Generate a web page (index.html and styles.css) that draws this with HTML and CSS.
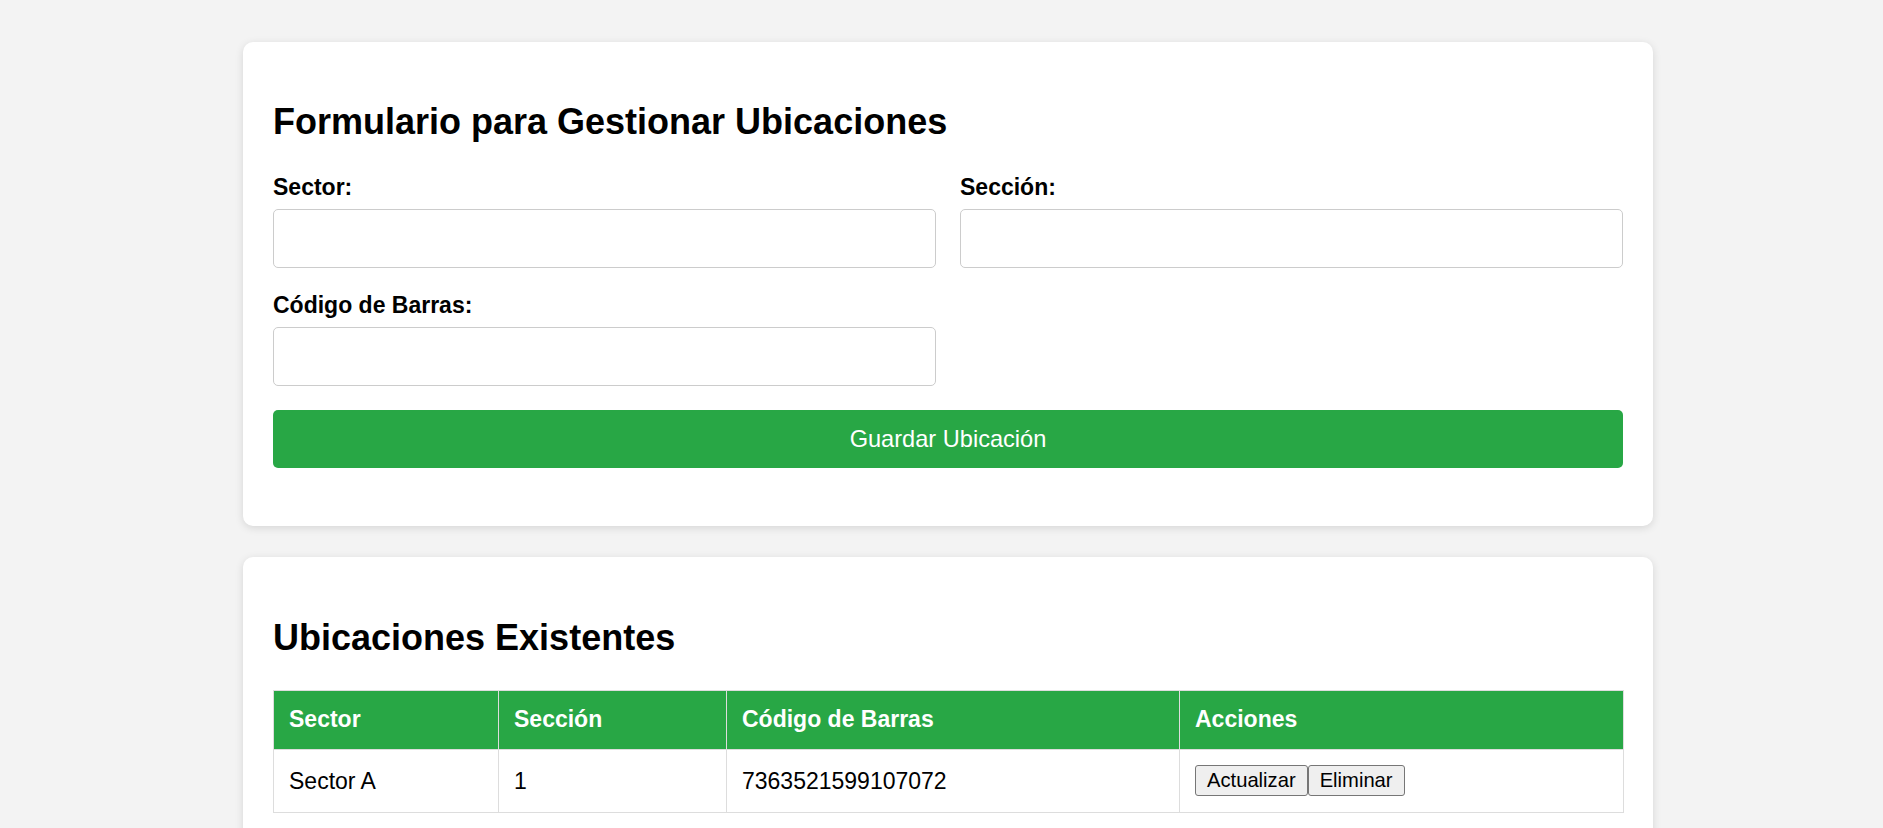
FILE: index.html
```html
<!DOCTYPE html>
<html lang="es">
<head>
<meta charset="utf-8">
<title>Gestionar Ubicaciones</title>
<link rel="stylesheet" href="styles.css">
</head>
<body>
<main class="page">
  <section class="card">
    <h2 class="title">Formulario para Gestionar Ubicaciones</h2>
    <form class="form">
      <div class="field">
        <label class="label" for="sector">Sector:</label>
        <input class="input" id="sector" type="text">
      </div>
      <div class="field">
        <label class="label" for="seccion">Sección:</label>
        <input class="input" id="seccion" type="text">
      </div>
      <div class="field">
        <label class="label" for="codigo">Código de Barras:</label>
        <input class="input" id="codigo" type="text">
      </div>
      <button class="save" type="button">Guardar Ubicación</button>
    </form>
  </section>

  <section class="card card-list">
    <h2 class="title title-list">Ubicaciones Existentes</h2>
    <table class="table">
      <colgroup>
        <col class="c1"><col class="c2"><col class="c3"><col class="c4">
      </colgroup>
      <thead>
        <tr>
          <th>Sector</th>
          <th>Sección</th>
          <th>Código de Barras</th>
          <th>Acciones</th>
        </tr>
      </thead>
      <tbody>
        <tr>
          <td>Sector A</td>
          <td>1</td>
          <td>7363521599107072</td>
          <td><div class="actions"><button class="btn" type="button">Actualizar</button><button class="btn" type="button">Eliminar</button></div></td>
        </tr>
      </tbody>
    </table>
  </section>
</main>
</body>
</html>
```

FILE: styles.css
```css
* { box-sizing: border-box; }

html, body {
  margin: 0;
  background: #f3f3f3;
}

body {
  font-family: "Liberation Sans", Arial, sans-serif;
  color: #000;
  padding: 42px 230px 40px 243px;
}

.page {
  display: flex;
  flex-direction: column;
  gap: 31px;
}

.card {
  background: #fff;
  border-radius: 10px;
  box-shadow: 0 2px 8px rgba(0, 0, 0, 0.12);
  padding: 31px 30px 58px;
}

.card-list {
  padding-bottom: 40px;
}

.title {
  font-size: 36px;
  font-weight: bold;
  line-height: 41px;
  margin: 27.5px 0 32px;
}

.title-list {
  margin-top: 29px;
  margin-bottom: 32px;
}

.form {
  display: grid;
  grid-template-columns: 1fr 1fr;
  column-gap: 24px;
  row-gap: 24px;
}

.field {
  display: flex;
  flex-direction: column;
}

.label {
  font-size: 23px;
  font-weight: bold;
  line-height: 26.4px;
  margin-bottom: 9px;
}

.input {
  height: 59px;
  border: 1px solid #ccc;
  border-radius: 5px;
  font: inherit;
  font-size: 23px;
  padding: 0 12px;
  background: #fff;
}

.save {
  grid-column: 1 / -1;
  height: 58px;
  border: none;
  border-radius: 5px;
  background: #28a745;
  color: #fff;
  font-family: "Liberation Sans", Arial, sans-serif;
  font-size: 23.6px;
  cursor: pointer;
}

.table {
  width: 100%;
  border-collapse: collapse;
  table-layout: fixed;
}

.c1 { width: 225px; }
.c2 { width: 228px; }
.c3 { width: 453px; }
.c4 { width: 444px; }

.table th,
.table td {
  border: 1px solid #ddd;
  text-align: left;
  font-size: 23px;
  line-height: 26.4px;
}

.table th {
  background: #28a745;
  color: #fff;
  font-weight: bold;
  padding: 15px 15px 16px;
}

.table td {
  padding: 15.5px 15px;
  vertical-align: middle;
}

.actions {
  display: flex;
}

.btn {
  height: 31px;
  padding: 0 11px;
  font-family: "Liberation Sans", Arial, sans-serif;
  font-size: 20.2px;
  color: #000;
  background: #efefef;
  border: 1px solid #767676;
  border-radius: 3px;
}
```
